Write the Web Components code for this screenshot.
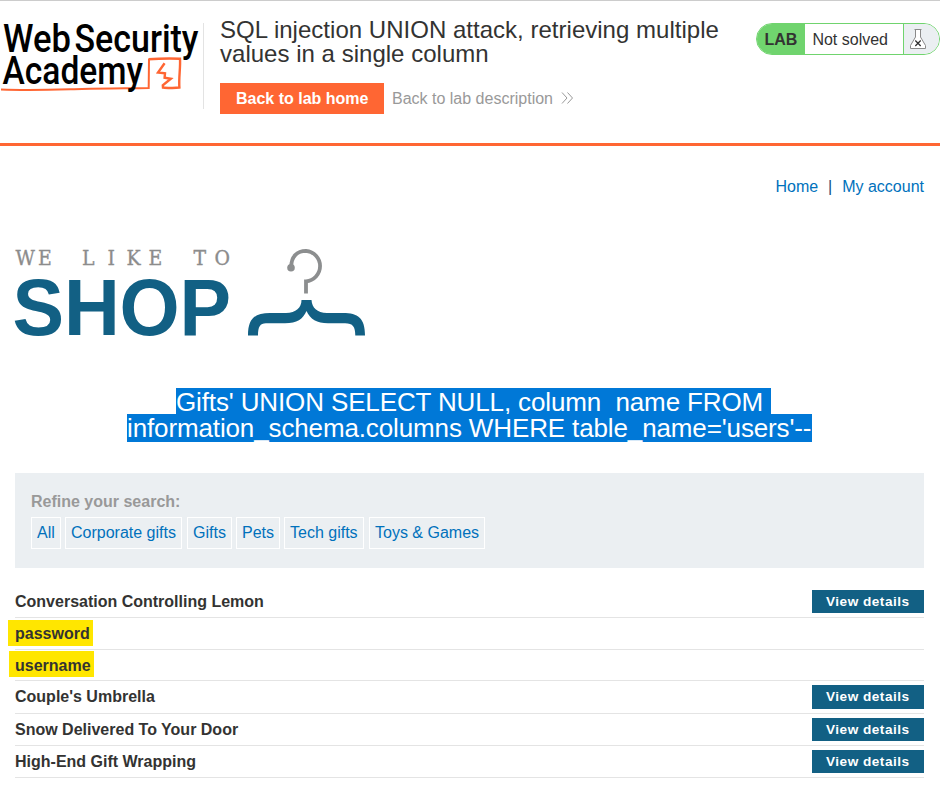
<!DOCTYPE html>
<html lang="en">
<head>
<meta charset="utf-8">
<title>SQL injection UNION attack, retrieving multiple values in a single column</title>
<style>
html,body{margin:0;background:#fff}
body{font:16px/20px "Liberation Sans",Arial,sans-serif;color:#333332;overflow:hidden}
</style>
</head>
<body>
<lab-page></lab-page>
<script>
const define=(name,html)=>customElements.define(name,class extends HTMLElement{
  constructor(){super();this.attachShadow({mode:'open'})}
  connectedCallback(){
    const t=document.createElement('template');
    t.innerHTML=html;
    this.shadowRoot.replaceChildren(t.content.cloneNode(true));
  }
});

define('academy-logo',`
<style>:host{display:block;width:203px;height:85px}svg{display:block;overflow:visible}text{font-family:Roboto,sans-serif;font-weight:500;font-size:38px;fill:#000}</style>
<svg width="203" height="85" viewBox="0 23 203 85">
  <path d="M1 89.5C30 90.6 55 89.7 82 89.1C105 88.3 126 88.4 148.7 88L149 59" fill="none" stroke="#f63" stroke-width="2"/>
  <path d="M148.500 59.300C160 58.400 170 58.300 180 58.700C180.600 68 178.600 78 179.400 87.500C174 88.400 168 87.900 163 87.600L162.800 85.200L170.800 78.700L164.600 77.800L165 73.300L158 72.500L164.600 63.200" fill="none" stroke="#f63" stroke-width="2.4"/>
  <text x="3" y="51.800" textLength="68" lengthAdjust="spacingAndGlyphs">Web</text>
  <text x="74.500" y="51.800" textLength="124" lengthAdjust="spacingAndGlyphs">Security</text>
  <text x="2.500" y="84" textLength="140.500" lengthAdjust="spacingAndGlyphs">Academy</text>
</svg>`);

define('lab-status',`
<style>
:host{display:flex;box-sizing:border-box;width:184px;height:32px;margin-top:22px;border:1px solid #70d46e;border-radius:16px;overflow:hidden;line-height:31px;background:#fff}
b{width:48px;background:#70d46e;padding-left:7.500px;box-sizing:border-box;line-height:32px}
span{width:99px;padding-left:7.400px;box-sizing:border-box;border-right:1px solid #70d46e}
i{flex:1;background:#ebeff2}svg{display:block}
</style>
<b>LAB</b><span>Not solved</span>
<i><svg width="34" height="30" viewBox="904 24 34 30"><path d="M915.500 29.500v7.500L910.500 45.500V48.500H925.500V45.500L920.500 37V29.500" fill="#fff" stroke="#8a8a8a"/><path d="M914.500 29.500h7" stroke="#8a8a8a"/><path d="M915.300 40.500l5.400 5.500m0-5.500l-5.400 5.500" stroke="#333" stroke-width="1.3"/></svg></i>`);

define('lab-header',`
<style>
:host{display:flex;box-sizing:border-box;height:146px;border-top:1px solid #ccc;border-bottom:3px solid #f63}
academy-logo{margin-top:22px}
section{flex:1;margin-top:17px}
.rule{width:1px;height:86px;margin-top:22px;background:#e3e3e3}
h2{margin:0 0 0 16px;font-weight:400;font-size:24px;line-height:24px;letter-spacing:.02px;white-space:nowrap}
nav{display:flex;margin:17px 0 0 16px}
.home{box-sizing:border-box;width:164px;height:31px;padding-left:16px;line-height:31px;background:#f63;color:#fff;font-weight:700}
.desc{line-height:31px;margin-left:8px;color:#999}
svg{display:block;margin:9px 0 0 8px}
</style>
<academy-logo></academy-logo><div class="rule"></div>
<section><h2><span>SQL injection UNION attack, retrieving multiple</span><br><span>values in a single column</span></h2>
<nav><span class="home">Back to lab home</span><span class="desc">Back to lab description</span>
<svg width="13" height="12" viewBox="0 0 13 12"><path d="M1 .5l5 5.500-5 5.500M6.500 .5l5 5.500-5 5.500" fill="none" stroke="#999"/></svg></nav></section>
<lab-status></lab-status>`);

define('shop-logo',`
<style>:host{display:block}svg{display:block;overflow:visible}
.m{font:21px "DejaVu Serif",serif;fill:#8c8c8c;stroke:#8c8c8c;stroke-width:.35}.s{font:bold 80.500px "Liberation Sans",sans-serif;fill:#126084}</style>
<svg width="370" height="100" viewBox="0 245 370 100">
  <g transform="scale(.9 1)"><text class="m" y="264.800" x="17.200 42.200 60 91.100 119.500 140.500 165 195 215 238.300">WE LIKE TO</text></g>
  <g transform="scale(.96 1)"><text class="s" x="13.100 66.600 124.500 187" y="335.500">SHOP</text></g>
  <circle cx="291" cy="267.700" r="3.800" fill="#8c8e8f"/>
  <path d="M291.300 267C291 257 297 250.800 306 250.800A15.300 15.300 0 0 1 306 281.300V293.500" fill="none" stroke="#8c8e8f" stroke-width="3.800"/>
  <path d="M301.500 300H311.500C312 308 317 312.500 327 313H343C358 313 365 318 365 335.500H355.300C355.300 327 353 323.300 345 323.300H328C317 323.300 310 319 306.500 311C303 319 297 323.300 285 323.300H266C260 323.300 258 327 258 335.500H248C248 318 255 313 270 313H286C296 312.500 301.500 308 301.500 300Z" fill="#126084"/>
</svg>`);

define('selected-title',`
<style>
:host{display:flex;flex-direction:column;align-items:center;width:909px;color:#fff;font-size:26px;white-space:pre}
div{background:#0078d7;line-height:28px}
.a{height:26px;width:595px;margin-left:8px;letter-spacing:-.13px}.b{height:28px;width:685px;position:relative;letter-spacing:-.13px}
</style>
<div class="a"><span>Gifts' UNION SELECT NULL, column_name FROM </span></div><div class="b"><span>information_schema.columns WHERE table_name='users'--</span></div>`);

define('filter-chip',`
<style>:host{display:block;box-sizing:border-box;height:32px;border:1px solid #fff;padding-left:5px;line-height:30px;color:#0071bc;white-space:nowrap}</style><slot></slot>`);

define('search-filter',`
<style>
:host{display:block;box-sizing:border-box;height:95px;background:#ebeff2;padding:19px 16px}
label{display:block;font-weight:700;color:#999;line-height:20px;margin-bottom:5px}
div{display:flex}
</style>
<label><span>Refine your search:</span></label>
<div><filter-chip style="width:30px;margin-right:4px">All</filter-chip><filter-chip style="width:117px;margin-right:5px">Corporate gifts</filter-chip><filter-chip style="width:45px;margin-right:4px">Gifts</filter-chip><filter-chip style="width:44px;margin-right:4px">Pets</filter-chip><filter-chip style="width:80px;margin-right:5px">Tech gifts</filter-chip><filter-chip style="width:116px">Toys &amp; Games</filter-chip></div>`);

define('product-row',`
<style>
:host{display:flex;justify-content:space-between;align-items:flex-end;box-sizing:border-box;border-bottom:1px solid #e4e4e4;font-weight:700}
.name{line-height:20px;margin-bottom:5px;white-space:nowrap}
:host([marked]) .name{background:#ffe600;margin:0 0 3px -7px;padding:1px 0 0 7px;width:78px;line-height:25px}
:host([marked=b]) .name{margin-left:-6px;padding:3px 0 0 6px;width:79px;line-height:23px}
:host([raised]) .name{margin-bottom:6px}
.btn{box-sizing:border-box;width:112px;height:23px;margin-bottom:4px;padding-left:14px;line-height:24px;background:#126084;color:#fff;font-size:13.600px;letter-spacing:.5px;white-space:nowrap}
:host([raised]) .btn{height:24px}
:host([marked]) .btn{display:none}
</style>
<span class="name"><slot></slot></span><span class="btn">View details</span>`);

define('lab-page',`
<style>
:host{display:block;height:785px;overflow:hidden}
main{padding:0 16px 0 15px}
.top{display:flex;justify-content:flex-end;line-height:20px;padding-top:31px;color:#0071bc}
.top i{font-style:normal;color:#0f5078;width:24px;text-align:center}
shop-logo{margin:48px 0 0 -15px}
selected-title{margin-top:43px}
search-filter{margin-top:31px}
</style>
<lab-header></lab-header>
<main>
<div class="top"><span>Home</span><i>|</i><span>My account</span></div>
<shop-logo></shop-logo>
<selected-title></selected-title>
<search-filter></search-filter>
<product-row style="height:50px">Conversation Controlling Lemon</product-row>
<product-row marked="a" style="height:32px">password</product-row>
<product-row marked="b" style="height:31px">username</product-row>
<product-row raised style="height:33px">Couple's Umbrella</product-row>
<product-row style="height:32px">Snow Delivered To Your Door</product-row>
<product-row style="height:32px">High-End Gift Wrapping</product-row>
</main>`);
</script>
</body>
</html>
